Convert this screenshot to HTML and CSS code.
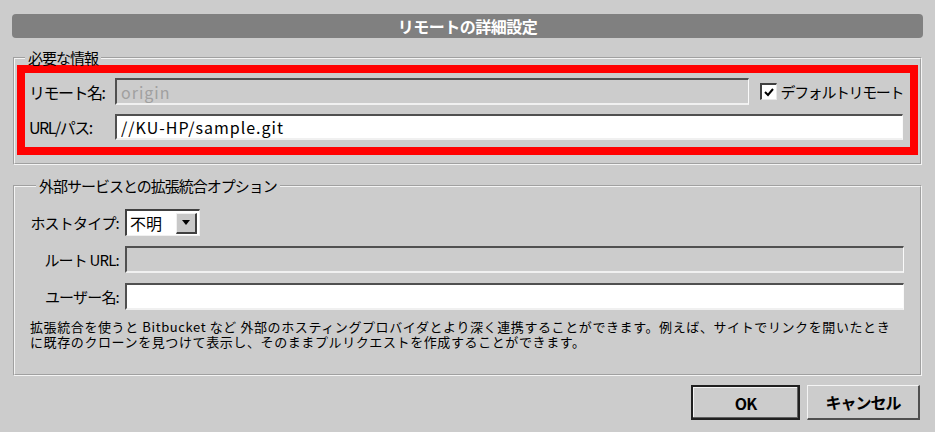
FILE: index.html
```html
<!DOCTYPE html>
<html lang="ja">
  <head>
    <meta charset="UTF-8" />
    <meta name="viewport" content="width=device-width, initial-scale=1.0" />
    <title>リモートの詳細設定</title>
    <link rel="stylesheet" href="styles.css">
  </head>
  <body>
    <div class="remote-dialog">
      <header class="remote-dialog-title">リモートの詳細設定</header>

      <fieldset class="remote-group remote-group-required">
        <legend>必要な情報</legend>
        <div class="remote-highlight">
          <div class="remote-row remote-row-name">
            <label for="remote-name">リモート名:</label>
            <input id="remote-name" type="text" value="origin" disabled />
            <label class="remote-check">
              <span class="remote-check-box">
                <svg viewBox="0 0 12 12" width="12" height="12" aria-hidden="true">
                  <polyline points="2,6 5,9 10,3" fill="none" stroke="#000" stroke-width="2" />
                </svg>
              </span>
              デフォルトリモート
            </label>
          </div>
          <div class="remote-row">
            <label for="remote-url">URL/パス:</label>
            <input id="remote-url" type="text" value="//KU-HP/sample.git" />
          </div>
        </div>
      </fieldset>

      <fieldset class="remote-group remote-group-options">
        <legend>外部サービスとの拡張統合オプション</legend>
        <div class="remote-options">
          <label for="host-type">ホストタイプ:</label>
          <div class="remote-combo" id="host-type">
            <span class="remote-combo-value">不明</span>
            <span class="remote-combo-button"><span class="remote-combo-arrow"></span></span>
          </div>

          <label for="root-url">ルート URL:</label>
          <input id="root-url" type="text" disabled />

          <label for="user-name">ユーザー名:</label>
          <input id="user-name" type="text" />
        </div>
        <p class="remote-note">
          拡張統合を使うと Bitbucket など 外部のホスティングプロバイダとより深く連携することができます。例えば、サイトでリンクを開いたとき<br />
          に既存のクローンを見つけて表示し、そのままプルリクエストを作成することができます。
        </p>
      </fieldset>

      <footer class="remote-actions">
        <button class="remote-btn remote-btn-default">OK</button>
        <button class="remote-btn">キャンセル</button>
      </footer>
    </div>
  </body>
</html>
```

FILE: styles.css
```css
:root {
  --bg: #cccccc;
  --dark: #404040;
  --shade: #808080;
  --light: #ffffff;
  --text: #000;
}

body {
  margin: 0;
  background: var(--bg);
  color: var(--text);
  font-family: "Noto Sans CJK JP", "Noto Sans", sans-serif;
}

.remote-dialog {
  padding: 14px 0 0;
}

.remote-dialog-title {
  margin: 0 12px;
  height: 24px;
  line-height: 24px;
  border-radius: 4px;
  background: var(--shade);
  color: #fff;
  font-weight: bold;
  font-size: 16px;
  letter-spacing: -0.5px;
  text-align: center;
}

/* Group boxes */
.remote-group {
  margin: 13px 13px 0;
  padding: 0 2px 8px;
  border: 2px groove #f4f4f4;
  min-width: 0;

  legend {
    margin-left: 8px;
    padding: 0 3px;
    font-size: 15px;
    line-height: 14px;
    letter-spacing: -1px;
  }
}

.remote-group-options {
  margin-top: 14px;
  padding: 16px 16px 0 13px;
  height: 197px;
  box-sizing: border-box;
}

.remote-highlight {
  border: 8px solid #ff0000;
  padding: 5px 7px 7px 4px;
  display: flex;
  flex-direction: column;
  gap: 9px;
}

.remote-row {
  display: grid;
  grid-template-columns: 86px 1fr;
  align-items: center;

  label {
    font-size: 16px;
    letter-spacing: -1.5px;
    white-space: nowrap;
  }
}

.remote-row-name {
  grid-template-columns: 86px 1fr 154px;
}

/* Text fields */
input {
  height: 27px;
  box-sizing: border-box;
  margin: 0;
  padding: 0 4px;
  background: var(--light);
  border-style: solid;
  border-width: 2px 1px 2px 2px;
  border-color: #505050 #fafafa #f0f0f0 #505050;
  font-family: "Noto Sans CJK JP", sans-serif;
  font-size: 16px;
  letter-spacing: 1px;
  color: #000;
}

input:disabled {
  background: var(--bg);
  color: #a0a0a0;
}

#remote-url {
  height: 26px;
}

.remote-row .remote-check {
  display: flex;
  align-items: center;
  gap: 4px;
  padding-left: 11px;
  font-size: 15px;
  letter-spacing: -1.4px;
}

.remote-check-box {
  display: inline-flex;
  align-items: center;
  justify-content: center;
  width: 17px;
  height: 17px;
  box-sizing: border-box;
  background: #fff;
  border-style: solid;
  border-width: 2px 1px 1px 2px;
  border-color: #404040 #e8e8e8 #e8e8e8 #404040;
}

/* Options grid */
.remote-options {
  display: grid;
  grid-template-columns: 97px 1fr;
  column-gap: 0;
  row-gap: 10px;
  align-items: center;

  label {
    justify-self: end;
    padding-right: 6px;
    font-size: 15px;
    letter-spacing: -0.8px;
    white-space: nowrap;
  }
}

.remote-combo {
  display: flex;
  align-items: center;
  width: 75px;
  height: 27px;
  box-sizing: border-box;
  background: #fff;
  border-style: solid;
  border-width: 2px 1px 1px 2px;
  border-color: #404040 #f0f0f0 #f0f0f0 #404040;
  padding: 1px 2px 1px 1px;
}

.remote-combo-value {
  flex: 1;
  padding-left: 2px;
  font-size: 16px;
}

.remote-combo-button {
  width: 21px;
  height: 21px;
  box-sizing: border-box;
  display: flex;
  align-items: center;
  justify-content: center;
  background: #c8c8c8;
  border-style: solid;
  border-width: 1px 2px 2px 1px;
  border-color: #f0f0f0 #404040 #404040 #f0f0f0;
}

.remote-combo-arrow {
  width: 0;
  height: 0;
  border-left: 4px solid transparent;
  border-right: 4px solid transparent;
  border-top: 5px solid #000;
}

.remote-note {
  margin: 9px 0 0 2px;
  font-size: 13px;
  line-height: 15px;
  letter-spacing: 0.6px;
  white-space: nowrap;
}

/* Buttons */
.remote-actions {
  display: flex;
  justify-content: flex-end;
  gap: 7px;
  padding: 9px 15px 0;
}

.remote-btn {
  width: 109px;
  height: 35px;
  margin: 0;
  background: var(--bg);
  border-style: solid;
  border-width: 1px 2px 2px 1px;
  border-color: #f4f4f4 #505050 #505050 #f4f4f4;
  font-family: "Noto Sans CJK JP", sans-serif;
  font-size: 16px;
  font-weight: bold;
  letter-spacing: -1px;
  color: #000;

  &:last-child {
    width: 113px;
  }
}

.remote-btn-default {
  border: 2px solid #202020;
  box-shadow: inset -1px -1px 0 #606060, inset 1px 1px 0 #f4f4f4;
}
```
